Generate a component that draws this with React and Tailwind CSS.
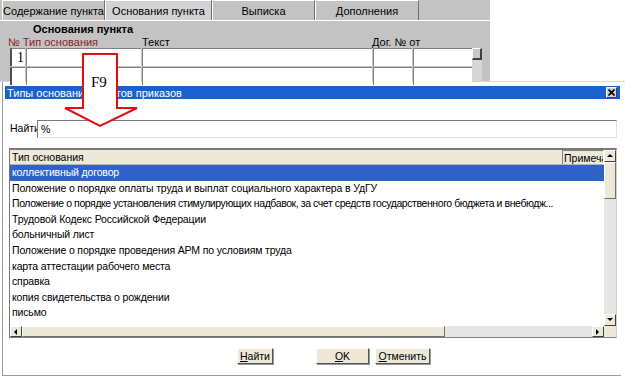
const ITEMS = [
  "коллективный договор",
  "Положение о порядке оплаты труда и выплат социального характера в УдГУ",
  "Положение о порядке установления стимулирующих надбавок, за счет средств государственного бюджета и внебюдж...",
  "Трудовой Кодекс Российской Федерации",
  "больничный лист",
  "Положение о порядке проведения АРМ по условиям труда",
  "карта аттестации рабочего места",
  "справка",
  "копия свидетельства о рождении",
  "письмо",
  "приказ",
];

const TABS = [
  { label: "Содержание пункта", w: "w-[103px]" },
  { label: "Основания пункта", w: "w-[107px]", active: true },
  { label: "Выписка", w: "w-[103px]" },
  { label: "Дополнения", w: "w-[104px]" },
];

function Arrow({ dir }) {
  const pts = {
    up: "1,5 4,2 7,5",
    down: "1,2 4,5 7,2",
    left: "5,1 2,4 5,7",
    right: "2,1 5,4 2,7",
  };
  return (
    <svg width="8" height="8" viewBox="0 0 8 8">
      <polygon points={pts[dir]} fill="#000" />
    </svg>
  );
}

function ScrollBtn({ dir }) {
  return (
    <div className="flex h-[12px] w-[12px] shrink-0 items-center justify-center border-t border-l border-white border-r border-b border-r-[#404040] border-b-[#404040] bg-[#ece9d8]">
      <Arrow dir={dir} />
    </div>
  );
}

function GridRow({ num }) {
  const cell = "h-full border-t border-l border-[#808080] bg-white";
  return (
    <div className="flex h-[18px] gap-[1px] pl-[10px]">
      <div className={`${cell} w-[15px] border-l-2 border-l-[#505050] pl-[5px] font-['Liberation_Serif',serif] text-[14px] leading-[17px]`}>
        {num}
      </div>
      <div className={`${cell} w-[115px]`} />
      <div className={`${cell} w-[230px]`} />
      <div className={`${cell} w-[39px]`} />
      <div className={`${cell} w-[59px]`} />
    </div>
  );
}

function Button({ children, w }) {
  return (
    <button
      type="button"
      className={`${w} h-[16px] border-t border-l border-white border-r border-b border-r-[#555] border-b-[#555] bg-[#ece9d8] text-[10.5px] leading-[14px] text-black shadow-[1px_1px_0_#999]`}
    >
      {children}
    </button>
  );
}

export default function App() {
  return (
    <div className="relative h-[378px] w-[625px] overflow-hidden bg-white font-['Liberation_Sans',Arial,sans-serif] text-[11px] text-black">
      {/* parent form */}
      <div className="flex">
        <div className="h-[81px] w-[490px] bg-[#c3c3c3]">
          <div className="flex h-[20px] pl-[2px]">
            {TABS.map((t) => (
              <div
                key={t.label}
                className={`${t.w} flex items-center justify-center border-t border-l border-white border-r border-r-[#6e6e6e] leading-[18px] ${
                  t.active ? "bg-[#d2d2d2]" : "bg-[#c3c3c3]"
                }`}
              >
                {t.label}
              </div>
            ))}
          </div>
          <div className="border-t border-white">
            <div className="pl-[33px] pt-[2px] font-bold leading-[12px]">Основания пункта</div>
            <div className="flex h-[13px] items-center leading-[12px]">
              <span className="w-[142px] pl-[8px] text-[#8b2323]">№ Тип основания</span>
              <span className="w-[230px]">Текст</span>
              <span>Дог. № от</span>
            </div>
            <div className="relative flex flex-col gap-[1px]">
              <GridRow num="1" />
              <GridRow num="" />
              <div className="absolute left-[472px] top-0 flex h-[34px] w-[10px] flex-col bg-[#d6d6d6]">
                <div className="h-[12px] border-t border-l border-white border-r-2 border-b-2 border-r-[#404040] border-b-[#404040] bg-[#c8c8c8]" />
              </div>
            </div>
          </div>
        </div>
      </div>

      {/* dialog */}
      <div className="h-[297px] border-t border-[#cfdff0]">
        <div className="ml-[2px] h-[294px] w-[619px] border-l border-b border-[#9a9a9a]">
          <div className="h-[4px]" />
          <div className="ml-[2px] flex h-[13px] w-[615px] items-center justify-between bg-[#1862d0] pl-[2px] pr-[3px]">
            <span className="leading-[12px] text-white">Типы оснований пунктов приказов</span>
            <div className="flex h-[11px] w-[11px] items-center justify-center border-t border-l border-white border-r border-b border-r-[#404040] border-b-[#404040] bg-[#d4d0c8]">
              <svg width="7" height="7" viewBox="0 0 7 7">
                <path d="M0.5 0.5 L6.5 6.5 M6.5 0.5 L0.5 6.5" stroke="#000" strokeWidth="1.6" />
              </svg>
            </div>
          </div>

          <div className="mt-[21px] flex h-[18px] items-center pl-[7px] text-[10.5px]">
            <span className="w-[27px] whitespace-nowrap">Найти</span>
            <div className="h-[18px] w-[580px] border-t border-l border-[#7a7a7a] border-r border-b border-r-[#e4e4e4] border-b-[#e4e4e4] bg-white pl-[3px] leading-[16px]">
              %
            </div>
          </div>

          <div className="ml-[6px] mt-[10px] h-[190px] w-[608px] border-t-2 border-l border-[#7a7a7a] border-r border-b border-r-[#d0d0d0] border-b-[#808080] text-[10.5px]">
            <div className="flex h-[176px]">
              <div className="w-[594px] overflow-hidden">
                <div className="flex h-[15px] border-b border-[#b8b4a8] bg-[#ece9d8] leading-[14px]">
                  <div className="w-[552px] pl-[2px]">Тип основания</div>
                  <div className="w-[42px] overflow-hidden whitespace-nowrap border-l border-t border-[#808080] border-r border-r-white pl-[1px]">
                    Примеча
                  </div>
                </div>
                <div className="h-[161px] overflow-hidden">
                  {ITEMS.map((it, i) => (
                    <div
                      key={it}
                      className={`h-[15.6px] leading-[15.6px] ${i === 0 ? "bg-[#2f63c8] text-white" : ""}`}
                    >
                      <div
                        className={`w-[552px] overflow-hidden whitespace-nowrap pl-[2px] ${
                          i === 2 ? "tracking-[-0.42px]" : "tracking-[-0.15px]"
                        }`}
                      >
                        {it}
                      </div>
                    </div>
                  ))}
                </div>
              </div>
              <div className="flex w-[12px] flex-col bg-[#e6e6e6]">
                <ScrollBtn dir="up" />
                <div className="h-[37px] border-t border-l border-white border-r border-b border-r-[#707070] border-b-[#707070] bg-[#ece9d8]" />
                <div className="flex-1" />
                <ScrollBtn dir="down" />
              </div>
            </div>
            <div className="flex h-[11px]">
              <div className="flex w-[594px] bg-[#e6e6e6]">
                <div className="flex h-[11px] w-[12px] items-center justify-center border-t border-l border-white border-r border-b border-r-[#404040] border-b-[#404040] bg-[#ece9d8]">
                  <Arrow dir="left" />
                </div>
                <div className="h-[11px] w-[423px] border-t border-l border-white border-r border-b border-r-[#707070] border-b-[#707070] bg-[#ece9d8]" />
                <div className="flex-1" />
                <div className="flex h-[11px] w-[12px] items-center justify-center border-t border-l border-white border-r border-b border-r-[#404040] border-b-[#404040] bg-[#ece9d8]">
                  <Arrow dir="right" />
                </div>
              </div>
              <div className="w-[12px] bg-[#ece9d8]" />
            </div>
          </div>

          <div className="mt-[10px] flex h-[16px] pl-[234px]">
            <Button w="w-[36px]">
              <span className="underline">Н</span>айти
            </Button>
            <div className="w-[43px]" />
            <Button w="w-[53px]">
              <span className="underline">O</span>K
            </Button>
            <div className="w-[6px]" />
            <Button w="w-[55px]">
              <span className="underline">О</span>тменить
            </Button>
          </div>
        </div>
      </div>

      {/* F9 callout arrow */}
      <div className="absolute left-[64px] top-[53px] h-[75px] w-[75px]">
        <svg width="75" height="75" viewBox="0 0 75 75">
          <polygon
            points="19,1 53,1 53,55 73,55 36,73 1,55 19,55"
            fill="#fff"
            stroke="#e01010"
            strokeWidth="2"
            strokeLinejoin="miter"
          />
        </svg>
        <span className="absolute left-[27px] top-[22px] font-['Liberation_Serif',serif] text-[15px] leading-[15px] text-black">
          F9
        </span>
      </div>
    </div>
  );
}
